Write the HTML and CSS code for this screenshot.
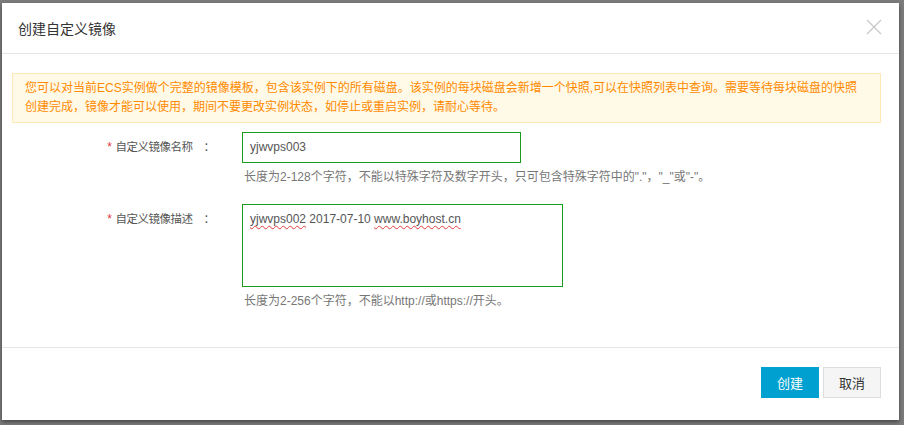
FILE: index.html
```html
<!DOCTYPE html>
<html lang="zh-CN">
<head>
  <meta charset="UTF-8" />
  <meta name="viewport" content="width=device-width, initial-scale=1.0"/>
  <title>创建自定义镜像</title>
  <link rel="stylesheet" href="styles.css">
</head>
<body>

  <div class="modal">
    <div class="modal-header">
      <h4 class="modal-title">创建自定义镜像</h4>
      <span class="close">
        <svg width="16" height="16" viewBox="0 0 16 16"><path d="M1 1L15 15M15 1L1 15" stroke="#c8c8c8" stroke-width="1.3" fill="none"/></svg>
      </span>
    </div>

    <div class="modal-body">
      <div class="alert">您可以对当前ECS实例做个完整的镜像模板，包含该实例下的所有磁盘。该实例的每块磁盘会新增一个快照,可以在快照列表中查询。需要等待每块磁盘的快照创建完成，镜像才能可以使用，期间不要更改实例状态，如停止或重启实例，请耐心等待。</div>

      <div class="form-row">
        <label class="form-label"><span class="req">*</span>自定义镜像名称<span class="colon">：</span></label>
        <div class="form-field">
          <div class="input">yjwvps003</div>
          <p class="help">长度为2-128个字符，不能以特殊字符及数字开头，只可包含特殊字符中的"."，"_"或"-"。</p>
        </div>
      </div>

      <div class="form-row">
        <label class="form-label"><span class="req">*</span>自定义镜像描述<span class="colon">：</span></label>
        <div class="form-field">
          <div class="input textarea"><span class="typo">yjwvps002</span> 2017-07-10 <span class="typo">www.boyhost.cn</span></div>
          <p class="help">长度为2-256个字符，不能以http://或https://开头。</p>
        </div>
      </div>
    </div>

    <div class="modal-footer">
      <button class="btn btn-primary">创建</button>
      <button class="btn">取消</button>
    </div>
  </div>

</body>
</html>
```

FILE: styles.css
```css
body {
  margin: 0;
  padding: 3px 0 0 2px;
  background: #7b7b7b;
  font-family: "Liberation Sans", "Noto Sans CJK SC", sans-serif;
  font-size: 12px;
  color: #333;
  height: 425px;
  box-sizing: border-box;
  overflow: hidden;
}

.modal {
  width: 897px;
  height: 417px;
  background: #fff;
  box-shadow: 0 2px 4px rgba(0, 0, 0, 0.45);
  display: flex;
  flex-direction: column;
}

.modal-header {
  height: 50px;
  border-bottom: 1px solid #e5e5e5;
  display: flex;
  align-items: center;
  justify-content: space-between;
  padding: 0 17px 0 16px;
}

.modal-title {
  margin: 0;
  font-size: 14px;
  font-weight: normal;
  color: #333;
}

.close {
  display: flex;
  margin-top: -2px;
}

.modal-body {
  flex: 1;
  padding: 19px 18px 0 10px;
  border-bottom: 1px solid #e5e5e5;
}

.alert {
  background: #fffae8;
  border: 1px solid #ffe8b8;
  color: #ff8a00;
  line-height: 19px;
  padding: 5px 12px;
  margin-bottom: 9px;
}

.form-row {
  display: flex;
  margin-bottom: 20px;
}

.form-label {
  width: 203px;
  text-align: right;
  padding-top: 8px;
  line-height: 14px;
  font-size: 11.5px;
  color: #555;
  letter-spacing: -0.5px;
}

.colon {
  margin-left: 11px;
  letter-spacing: 0;
}

.req {
  color: #e4393c;
  font-size: 12px;
  margin-right: 4px;
}

.form-field {
  margin-left: 27px;
}

.input {
  width: 263px;
  height: 15px;
  padding: 7px 7px;
  border: 1px solid #1b9b1b;
  font-size: 12px;
  line-height: 15px;
  color: #555;
}

.textarea {
  width: 305px;
  height: 67px;
}

.typo {
  text-decoration: underline wavy #e23c3c;
  text-decoration-thickness: 1px;
  text-underline-offset: 2px;
}

.help {
  margin: 7px 0 0 2px;
  line-height: 14px;
  color: #777;
}

.modal-footer {
  display: flex;
  justify-content: flex-end;
  gap: 4px;
  padding: 19px 18px 0 0;
  height: 53px;
}

.btn {
  width: 58px;
  height: 31px;
  border: 1px solid #ddd;
  background: #f5f5f5;
  color: #333;
  font-family: inherit;
  font-size: 13px;
  padding: 0;
  cursor: pointer;
}

.btn-primary {
  background: #00a1d0;
  border-color: #00a1d0;
  color: #fff;
}
```
